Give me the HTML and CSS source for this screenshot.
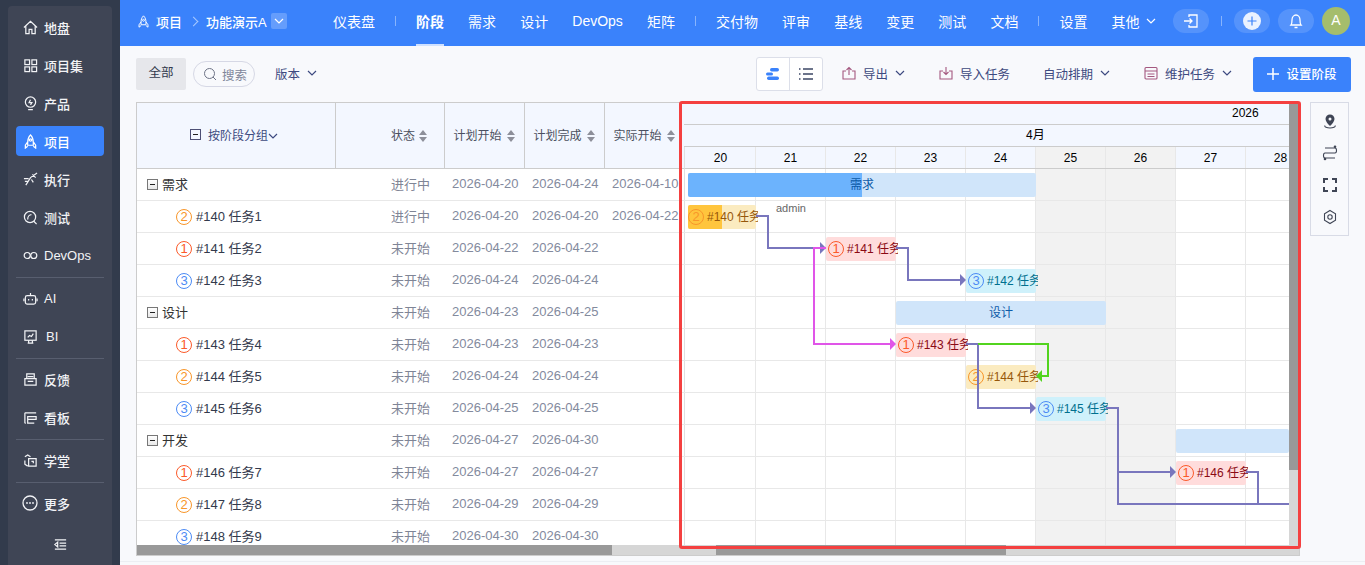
FILE: index.html

```html
<!DOCTYPE html>
<html lang="zh-CN">
<head>
  <meta charset="UTF-8">
  <meta name="viewport" content="width=device-width, initial-scale=1.0">
  <title>阶段 - 功能演示A</title>
  <link rel="stylesheet" href="styles.css">
</head>
<body>

<svg class="sprites" width="0" height="0">
  <symbol id="i-home" viewBox="0 0 16 16"><path d="M1 8 8 1.500 15 8M3 6.500V14.500h3.500V10h3v4.500H13V6.500"/></symbol>
  <symbol id="i-grid" viewBox="0 0 16 16"><rect x="2" y="2" width="5" height="5"/><rect x="9.500" y="2" width="5" height="5"/><rect x="2" y="9.500" width="5" height="5"/><rect x="9.500" y="9.500" width="5" height="5"/></symbol>
  <symbol id="i-bulb" viewBox="0 0 16 16"><circle cx="8" cy="6.500" r="5.500"/><path d="M8 4 6.500 7H9.500L8 9.500M5.500 14.500h5"/></symbol>
  <symbol id="i-rocket" viewBox="0 0 16 16"><path d="M8 1c2.500 2.500 3 5 3 8v3H5V9c0-3 .5-5.500 3-8ZM5 8.500 2.500 12v3L5 13M11 8.500 13.500 12v3L11 13"/><circle cx="8" cy="6.500" r="1.200"/></symbol>
  <symbol id="i-run" viewBox="0 0 16 16"><path d="M15 1 8 6 3 14M10 2.500l3.500 3.500M9 8l2 3M1 7h5M2 10h3"/></symbol>
  <symbol id="i-test" viewBox="0 0 16 16"><circle cx="7.500" cy="7.500" r="6"/><path d="M11.500 12 14.500 15M5 10c0-3 2-5 4-5"/></symbol>
  <symbol id="i-loop" viewBox="0 0 16 16"><circle cx="4.500" cy="8" r="3.200"/><circle cx="11.500" cy="8" r="3.200"/></symbol>
  <symbol id="i-bot" viewBox="0 0 16 16"><rect x="2.500" y="5" width="11" height="9" rx="2"/><path d="M8 5V2M1 8v3M15 8v3M6 8.500v1.500M10 8.500v1.500"/></symbol>
  <symbol id="i-board" viewBox="0 0 16 16"><rect x="2" y="2" width="12" height="10"/><path d="M5 15h6M6 12v3M10 12v3M5 9l2-2 2 1 2-3"/></symbol>
  <symbol id="i-print" viewBox="0 0 16 16"><path d="M4 7V2h8v5M2 7h12v7H2ZM5 10h6M5 5h6"/></symbol>
  <symbol id="i-kanban" viewBox="0 0 16 16"><path d="M2 3h12M2 3v11M5 7h9v3H5ZM5 10v4h7M2 14h1"/></symbol>
  <symbol id="i-school" viewBox="0 0 16 16"><path d="M2 4 5 2l3 2M6 6h8v8H6ZM2 8v4l3 2M9 9h2v2"/></symbol>
  <symbol id="i-collapse" viewBox="0 0 16 16"><path d="M2 3h12M7 6.500h7M7 9.500h7M2 13h12M5 5.500 2 8l3 2.500Z"/></symbol>
  <symbol id="i-down" viewBox="0 0 10 10"><path d="M1 3 5 7l4-4"/></symbol>
  <symbol id="i-search" viewBox="0 0 14 14"><circle cx="6.500" cy="6.500" r="5"/><path d="m10 10 3 3"/></symbol>
  <symbol id="i-out" viewBox="0 0 14 14"><path d="M4 5H1v8h12V5H10M7 9V1.500M4.500 4 7 1.500 9.500 4"/></symbol>
  <symbol id="i-in" viewBox="0 0 14 14"><path d="M4 5H1v8h12V5H10M7 1v7.500M4.500 6 7 8.500 9.500 6"/></symbol>
  <symbol id="i-table" viewBox="0 0 14 14"><rect x="1" y="1.500" width="12" height="11.500" rx="1"/><path d="M1 5h12M3.500 8h7M3.500 10.500h7"/></symbol>
</svg>

<div class="app">
  <aside class="sidebar">
    <nav class="side-panel">
      <a class="side-item"><svg class="side-icon"><use href="#i-home"/></svg>地盘</a>
      <a class="side-item"><svg class="side-icon"><use href="#i-grid"/></svg>项目集</a>
      <a class="side-item"><svg class="side-icon"><use href="#i-bulb"/></svg>产品</a>
      <a class="side-item is-active"><svg class="side-icon"><use href="#i-rocket"/></svg>项目</a>
      <a class="side-item"><svg class="side-icon"><use href="#i-run"/></svg>执行</a>
      <a class="side-item"><svg class="side-icon"><use href="#i-test"/></svg>测试</a>
      <a class="side-item"><svg class="side-icon"><use href="#i-loop"/></svg>DevOps</a>
      <div class="side-divider"></div>
      <a class="side-item"><svg class="side-icon"><use href="#i-bot"/></svg>AI</a>
      <a class="side-item"><svg class="side-icon"><use href="#i-board"/></svg><span class="side-bi">BI</span></a>
      <div class="side-divider"></div>
      <a class="side-item"><svg class="side-icon"><use href="#i-print"/></svg>反馈</a>
      <a class="side-item"><svg class="side-icon"><use href="#i-kanban"/></svg>看板</a>
      <div class="side-divider"></div>
      <a class="side-item"><svg class="side-icon"><use href="#i-school"/></svg>学堂</a>
      <div class="side-divider"></div>
      <a class="side-item">
        <svg class="side-icon side-icon-more" viewBox="0 0 16 16"><circle cx="8" cy="8" r="7"/><circle class="dot" cx="5" cy="8" r=".9"/><circle class="dot" cx="8" cy="8" r=".9"/><circle class="dot" cx="11" cy="8" r=".9"/></svg>更多
      </a>
      <a class="side-collapse"><svg class="side-icon"><use href="#i-collapse"/></svg></a>
    </nav>
  </aside>

  <div class="main">
    <header class="topbar">
      <div class="crumbs">
        <svg class="crumb-icon"><use href="#i-rocket"/></svg>
        <span>项目</span>
        <span class="crumb-sep"></span>
        <span>功能演示A</span>
        <span class="crumb-drop"><svg class="chev"><use href="#i-down"/></svg></span>
      </div>
      <nav class="topnav">
        <a>仪表盘</a>
        <i class="top-divider"></i>
        <a class="is-current">阶段</a>
        <a>需求</a>
        <a>设计</a>
        <a>DevOps</a>
        <a>矩阵</a>
        <i class="top-divider"></i>
        <a>交付物</a>
        <a>评审</a>
        <a>基线</a>
        <a>变更</a>
        <a>测试</a>
        <a>文档</a>
        <i class="top-divider"></i>
        <a>设置</a>
        <a class="top-more">其他<svg class="chev"><use href="#i-down"/></svg></a>
      </nav>
      <div class="top-actions">
        <span class="pill">
          <svg class="pill-icon" viewBox="0 0 16 16"><path d="M6 4V2h8v12H6v-2M1 8h8M6.500 5.500 9 8l-2.500 2.500"/></svg>
        </span>
        <i class="top-divider"></i>
        <span class="pill">
          <svg class="plus-icon" viewBox="0 0 18 18"><circle cx="9" cy="9" r="9"/><path d="M9 4.500v9M4.500 9h9"/></svg>
        </span>
        <span class="pill">
          <svg class="pill-icon" viewBox="0 0 16 16"><path d="M3 12c1-1 1-2 1-5 0-3 2-5 4-5s4 2 4 5c0 3 0 4 1 5ZM6.500 14.500h3"/></svg>
        </span>
        <span class="avatar">A</span>
      </div>
    </header>

    <div class="toolbar">
      <span class="tab-all">全部</span>
      <span class="search"><svg class="search-icon"><use href="#i-search"/></svg>搜索</span>
      <span class="tool version">版本<svg class="chev"><use href="#i-down"/></svg></span>
      <div class="tool-right">
        <div class="seg">
          <span class="seg-btn">
            <svg width="16" height="14" viewBox="0 0 16 14"><rect class="seg-blue" x="5" y="1" width="9" height="3.500" rx="1.700"/><rect class="seg-blue" x="1" y="5.500" width="7" height="3" rx="1.500"/><rect class="seg-blue" x="2" y="9.500" width="12" height="3.500" rx="1.700"/></svg>
          </span>
          <span class="seg-btn">
            <svg width="16" height="14" viewBox="0 0 16 14"><path class="seg-list" d="M5 2h10M5 7h10M5 12h10M1 2h1.500M1 7h1.500M1 12h1.500"/></svg>
          </span>
        </div>
        <span class="tool tool-export"><svg class="tool-icon"><use href="#i-out"/></svg>导出<svg class="chev"><use href="#i-down"/></svg></span>
        <span class="tool tool-import"><svg class="tool-icon"><use href="#i-in"/></svg>导入任务</span>
        <span class="tool tool-auto">自动排期<svg class="chev"><use href="#i-down"/></svg></span>
        <span class="tool tool-keep"><svg class="tool-icon"><use href="#i-table"/></svg>维护任务<svg class="chev"><use href="#i-down"/></svg></span>
        <span class="btn-primary">
          <svg width="12" height="12" viewBox="0 0 12 12"><path d="M6 0v12M0 6h12"/></svg>设置阶段
        </span>
      </div>
    </div>

    <div class="content">
      <div class="gantt">
        <div class="grid-pane">
          <div class="grid-head">
            <div class="th th-tree"><span class="box box-head"></span>按阶段分组<svg class="chev"><use href="#i-down"/></svg></div>
            <div class="th th-status">状态<span class="sort"></span></div>
            <div class="th th-date">计划开始<span class="sort"></span></div>
            <div class="th th-date">计划完成<span class="sort"></span></div>
            <div class="th th-date">实际开始<span class="sort"></span></div>
          </div>
          <div class="grid-body">
            <div class="row"><div class="cell-name group"><span class="box"></span>需求</div><div class="cell-status">进行中</div><div class="cell-date">2026-04-20</div><div class="cell-date">2026-04-24</div><div class="cell-date">2026-04-10</div></div>
            <div class="row"><div class="cell-name task"><span class="pri pri-2">2</span>#140 任务1</div><div class="cell-status">进行中</div><div class="cell-date">2026-04-20</div><div class="cell-date">2026-04-20</div><div class="cell-date">2026-04-22</div></div>
            <div class="row"><div class="cell-name task"><span class="pri pri-1">1</span>#141 任务2</div><div class="cell-status">未开始</div><div class="cell-date">2026-04-22</div><div class="cell-date">2026-04-22</div><div class="cell-date"></div></div>
            <div class="row"><div class="cell-name task"><span class="pri pri-3">3</span>#142 任务3</div><div class="cell-status">未开始</div><div class="cell-date">2026-04-24</div><div class="cell-date">2026-04-24</div><div class="cell-date"></div></div>
            <div class="row"><div class="cell-name group"><span class="box"></span>设计</div><div class="cell-status">未开始</div><div class="cell-date">2026-04-23</div><div class="cell-date">2026-04-25</div><div class="cell-date"></div></div>
            <div class="row"><div class="cell-name task"><span class="pri pri-1">1</span>#143 任务4</div><div class="cell-status">未开始</div><div class="cell-date">2026-04-23</div><div class="cell-date">2026-04-23</div><div class="cell-date"></div></div>
            <div class="row"><div class="cell-name task"><span class="pri pri-2">2</span>#144 任务5</div><div class="cell-status">未开始</div><div class="cell-date">2026-04-24</div><div class="cell-date">2026-04-24</div><div class="cell-date"></div></div>
            <div class="row"><div class="cell-name task"><span class="pri pri-3">3</span>#145 任务6</div><div class="cell-status">未开始</div><div class="cell-date">2026-04-25</div><div class="cell-date">2026-04-25</div><div class="cell-date"></div></div>
            <div class="row"><div class="cell-name group"><span class="box"></span>开发</div><div class="cell-status">未开始</div><div class="cell-date">2026-04-27</div><div class="cell-date">2026-04-30</div><div class="cell-date"></div></div>
            <div class="row"><div class="cell-name task"><span class="pri pri-1">1</span>#146 任务7</div><div class="cell-status">未开始</div><div class="cell-date">2026-04-27</div><div class="cell-date">2026-04-27</div><div class="cell-date"></div></div>
            <div class="row"><div class="cell-name task"><span class="pri pri-2">2</span>#147 任务8</div><div class="cell-status">未开始</div><div class="cell-date">2026-04-29</div><div class="cell-date">2026-04-29</div><div class="cell-date"></div></div>
            <div class="row"><div class="cell-name task"><span class="pri pri-3">3</span>#148 任务9</div><div class="cell-status">未开始</div><div class="cell-date">2026-04-30</div><div class="cell-date">2026-04-30</div><div class="cell-date"></div></div>
          </div>
          <div class="hscroll"><div class="thumb thumb-grid"></div></div>
        </div>

        <div class="chart-pane">
          <div class="chart-main">
            <div class="chart-view">
              <div class="scale">
                <div class="scale-year">2026</div>
                <div class="scale-month">4月</div>
                <div class="scale-days">
                  <span class="day">20</span>
                  <span class="day">21</span>
                  <span class="day">22</span>
                  <span class="day">23</span>
                  <span class="day">24</span>
                  <span class="day is-off">25</span>
                  <span class="day is-off">26</span>
                  <span class="day">27</span>
                  <span class="day">28</span>
                </div>
              </div>
              <div class="canvas">
                <div class="cols">
                  <span class="col"></span>
                  <span class="col"></span>
                  <span class="col"></span>
                  <span class="col"></span>
                  <span class="col"></span>
                  <span class="col is-off"></span>
                  <span class="col is-off"></span>
                  <span class="col"></span>
                  <span class="col"></span>
                </div>
                <div class="row-lines"></div>

                <div class="bar bar-phase" style="left:4px;top:4px;width:348px"><div class="bar-fill fill-phase" style="width:174px"></div><span class="bar-title">需求</span></div>
                <div class="bar bar-amber" style="left:4px;top:36px;width:68px"><div class="bar-fill fill-amber" style="width:34px"></div><div class="bar-text bar-text-flush"><span class="pri pri-2">2</span>#140 任务1</div></div>
                <span class="assignee" style="left:92px;top:33px">admin</span>
                <div class="bar bar-red" style="left:142px;top:68px;width:70px"><div class="bar-text"><span class="pri pri-1">1</span>#141 任务2</div></div>
                <div class="bar bar-cyan" style="left:282px;top:100px;width:70px"><div class="bar-text"><span class="pri pri-3">3</span>#142 任务3</div></div>
                <div class="bar bar-phase" style="left:212px;top:132px;width:210px"><span class="bar-title">设计</span></div>
                <div class="bar bar-red" style="left:212px;top:164px;width:70px"><div class="bar-text"><span class="pri pri-1">1</span>#143 任务4</div></div>
                <div class="bar bar-amber" style="left:282px;top:196px;width:70px"><div class="bar-text"><span class="pri pri-2">2</span>#144 任务5</div></div>
                <div class="bar bar-cyan" style="left:352px;top:228px;width:70px"><div class="bar-text"><span class="pri pri-3">3</span>#145 任务6</div></div>
                <div class="bar bar-phase" style="left:492px;top:260px;width:113px"></div>
                <div class="bar bar-red" style="left:492px;top:292px;width:70px"><div class="bar-text"><span class="pri pri-1">1</span>#146 任务7</div></div>

                <svg class="links" width="605" height="376" viewBox="684 169 605 376">
                  <path class="link" d="M756 216H768V248H821"/>
                  <path class="head" d="M820 242 826 248 820 254Z"/>
                  <path class="link" d="M896 248H908V280H961"/>
                  <path class="head" d="M960 274 966 280 960 286Z"/>
                  <path class="link-pink" d="M826 248H814V344H891"/>
                  <path class="head-pink" d="M890 338 896 344 890 350Z"/>
                  <path class="link" d="M966 344H978V408H1031"/>
                  <path class="head" d="M1030 402 1036 408 1030 414Z"/>
                  <path class="link-green" d="M978 344H1048V376H1041"/>
                  <path class="head-green" d="M1042 370 1036 376 1042 382Z"/>
                  <path class="link" d="M1106 408H1118V504H1289M1118 472H1171"/>
                  <path class="head" d="M1170 466 1176 472 1170 478Z"/>
                  <path class="link" d="M1246 472H1258V504"/>
                </svg>
              </div>
            </div>
            <div class="vscroll"><div class="thumb thumb-v"></div></div>
          </div>
          <div class="hscroll"><div class="thumb thumb-chart"></div></div>
        </div>

        <div class="highlight"></div>
      </div>

      <div class="side-tools">
        <svg class="st-icon" viewBox="0 0 16 16"><path class="st-solid" d="M8 1.500c-2.500 0-4.500 2-4.500 4.500 0 2.500 2.500 5 4.500 7 2-2 4.500-4.500 4.500-7 0-2.500-2-4.500-4.500-4.500Z"/><circle class="st-hole" cx="8" cy="6" r="1.500"/><path d="M3 12.500c-1 1.500 2 2.500 5 2.500s6-1 5-2.500"/></svg>
        <svg class="st-icon" viewBox="0 0 16 16"><path d="M3 3h10c2 0 2 5 0 5H3c-2 0-2 5 0 5h10"/><circle class="st-solid" cx="13" cy="1.800" r="1.300"/><circle class="st-solid" cx="3" cy="14" r="1.300"/></svg>
        <svg class="st-icon" viewBox="0 0 16 16"><path class="st-bold" d="M2 6V2h4M10 2h4v4M14 10v4h-4M6 14H2v-4"/></svg>
        <svg class="st-icon" viewBox="0 0 16 16"><path d="M8 1.500 13.500 4.700v6.600L8 14.500 2.500 11.300V4.700Z"/><circle cx="8" cy="8" r="2.200"/></svg>
      </div>
    </div>

    <div class="footer"></div>
  </div>
</div>

</body>
</html>
```

FILE: styles.css

```css
html, body {
  margin: 0;
  height: 100%;
  overflow: hidden;
}
body {
  background: #f8f9fc;
  color: #333a4d;
  font-family: "Liberation Sans", "Noto Sans CJK SC", sans-serif;
  font-size: 13px;
}
.sprites {
  position: absolute;
}
svg {
  fill: none;
  stroke: currentColor;
}
.app {
  display: flex;
  height: 565px;
}

/* left menu */
.sidebar {
  flex: none;
  width: 120px;
  padding: 6px 8px 0;
  box-sizing: border-box;
  background: #323b4c;
}
.side-panel {
  height: 100%;
  padding: 6px 8px 0;
  box-sizing: border-box;
  border-radius: 4px 4px 0 0;
  background: #3f4555;
}
.side-item {
  display: flex;
  align-items: center;
  gap: 6px;
  height: 30px;
  margin-bottom: 8px;
  padding-left: 7px;
  border-radius: 4px;
  color: #f2f3f6;
  font-weight: 500;
}
.side-item.is-active {
  background: #3a82fb;
  color: #fff;
}
.side-icon {
  flex: none;
  width: 15px;
  height: 15px;
  stroke-width: 1.300;
}
.side-icon .dot {
  fill: currentColor;
  stroke: none;
}
.side-icon-more {
  width: 16px;
  height: 16px;
  margin-left: -1px;
}
.side-bi {
  margin-left: 2px;
}
.side-divider {
  height: 1px;
  margin: -1px 0 5px;
  background: #585e6f;
}
.side-collapse {
  display: flex;
  justify-content: center;
  padding-top: 11px;
  color: #f2f3f6;
}

/* top bar */
.main {
  flex: 1;
  min-width: 0;
  display: flex;
  flex-direction: column;
}
.topbar {
  flex: none;
  display: flex;
  align-items: center;
  height: 46px;
  padding: 0 15px 0 17px;
  box-sizing: border-box;
  background: #3a82fb;
  color: #fff;
  font-size: 14px;
}
.chev {
  flex: none;
  width: 10px;
  height: 10px;
  stroke-width: 1.200;
}
.crumbs {
  flex: none;
  display: flex;
  align-items: center;
  width: 196px;
  margin-bottom: 4px;
  font-size: 13px;
  font-weight: 500;
}
.crumb-icon {
  width: 13px;
  height: 13px;
  margin-right: 6px;
  stroke-width: 1.200;
}
.crumb-sep {
  width: 6px;
  height: 6px;
  margin: 0 9px 0 8px;
  border-top: 1px solid #a9caff;
  border-right: 1px solid #a9caff;
  transform: rotate(45deg);
}
.crumb-drop {
  display: flex;
  align-items: center;
  justify-content: center;
  width: 16px;
  height: 16px;
  margin-left: 4px;
  border-radius: 2px;
  background: rgba(255, 255, 255, .22);
}
.topnav {
  display: flex;
  align-items: center;
  gap: 24.100px;
  height: 100%;
}
.topnav a {
  display: flex;
  align-items: center;
  gap: 6px;
  height: 100%;
  padding-bottom: 5px;
  box-sizing: border-box;
}
.topnav a.is-current {
  box-shadow: inset 0 -2px 0 #cfe1ff;
  font-weight: 700;
}
.topnav .top-divider {
  margin-bottom: 4px;
}
.top-divider {
  width: 1px;
  height: 10px;
  margin: 0 -4.100px;
  background: rgba(255, 255, 255, .4);
}
.top-actions {
  margin-left: auto;
  margin-bottom: 4px;
  display: flex;
  align-items: center;
  gap: 8px;
}
.top-actions .top-divider {
  margin: 0 4px;
}
.pill {
  display: flex;
  align-items: center;
  justify-content: center;
  width: 36px;
  height: 24px;
  border-radius: 12px;
  background: rgba(255, 255, 255, .14);
}
.pill-icon {
  width: 16px;
  height: 16px;
  stroke-width: 1.300;
}
.plus-icon {
  width: 18px;
  height: 18px;
}
.plus-icon circle {
  fill: #eaf2ff;
  stroke: none;
}
.plus-icon path {
  stroke: #3a82fb;
  stroke-width: 1.200;
}
.avatar {
  width: 28px;
  height: 28px;
  border-radius: 50%;
  background: #a5bd6c;
  line-height: 27px;
  text-align: center;
}

/* tool row */
.toolbar {
  flex: none;
  display: flex;
  align-items: center;
  height: 56px;
  padding: 0 14px 0 16px;
  box-sizing: border-box;
  color: #3d4a80;
  font-size: 12.500px;
}
.tab-all {
  width: 50px;
  height: 32px;
  border-radius: 2px;
  background: #e6e7eb;
  color: #333a4d;
  line-height: 30px;
  text-align: center;
}
.search {
  display: flex;
  align-items: center;
  gap: 5px;
  width: 62px;
  height: 26px;
  margin-left: 7px;
  padding-left: 9px;
  box-sizing: border-box;
  border: 1px solid #d6d8e5;
  border-radius: 13px;
  color: #80869a;
}
.search-icon {
  width: 14px;
  height: 14px;
  color: #6d7386;
}
.tool {
  display: flex;
  align-items: center;
  padding-bottom: 2px;
  white-space: nowrap;
}
.tool .chev {
  margin-left: 7px;
}
.tool-icon {
  width: 14px;
  height: 14px;
  margin-right: 7px;
  color: #a4587f;
  stroke-width: 1.100;
}
.version {
  margin-left: 20px;
}
.tool-right {
  margin-left: auto;
  display: flex;
  align-items: center;
}
.seg {
  display: flex;
  width: 67px;
  height: 34px;
  box-sizing: border-box;
  border: 1px solid #dcdfe9;
  border-radius: 3px;
  background: #fff;
}
.seg-btn {
  flex: 1;
  display: flex;
  align-items: center;
  justify-content: center;
}
.seg-btn + .seg-btn {
  border-left: 1px solid #dcdfe9;
}
.seg-blue {
  fill: #3a82fb;
  stroke: none;
}
.seg-list {
  stroke: #3d4766;
  stroke-width: 1.500;
}
.tool-export {
  margin-left: 19px;
}
.tool-import {
  margin-left: 34px;
}
.tool-auto {
  margin-left: 33px;
}
.tool-keep {
  margin-left: 34px;
}
.btn-primary {
  display: flex;
  align-items: center;
  justify-content: center;
  gap: 7px;
  width: 98px;
  height: 35px;
  margin-left: 21px;
  padding-bottom: 1px;
  box-sizing: border-box;
  border-radius: 3px;
  background: #3a82fb;
  color: #fff;
  font-weight: 500;
}
.btn-primary svg {
  stroke-width: 1.500;
}

/* gantt */
.content {
  flex: 1;
  min-height: 0;
  display: flex;
  align-items: flex-start;
  gap: 10px;
  padding-left: 16px;
}
.gantt {
  position: relative;
  display: flex;
  width: 1164px;
  height: 454px;
  box-sizing: border-box;
  border: 1px solid #ccc;
  background: #fff;
}
.grid-pane {
  flex: none;
  display: flex;
  flex-direction: column;
  width: 547px;
}
.grid-head {
  flex: none;
  display: grid;
  grid-template-columns: 199px 109px 80px 80px 79px;
  height: 66px;
  box-sizing: border-box;
  border-bottom: 1px solid #ccc;
  background: #f3f7ff;
  color: #4b5060;
  font-size: 12px;
}
.th {
  display: flex;
  align-items: center;
  padding-bottom: 2px;
  box-sizing: border-box;
  border-right: 1px solid #ccc;
}
.th:last-child {
  border-right: 0;
}
.th-tree {
  justify-content: center;
  color: #3d4a80;
  padding-right: 4px;
}
.th-status {
  padding-left: 55px;
}
.th-status .sort {
  margin-left: 4px;
}
.th-date {
  padding-left: 8.500px;
}
.th-tree .chev {
  margin-top: 2px;
}
.sort {
  position: relative;
  flex: none;
  width: 9px;
  height: 12px;
  margin-left: 5px;
  margin-top: 2px;
}
.sort::before, .sort::after {
  content: "";
  position: absolute;
  left: 0;
  border-left: 4.500px solid transparent;
  border-right: 4.500px solid transparent;
}
.sort::before {
  top: 0;
  border-bottom: 5px solid #8d8f9a;
}
.sort::after {
  bottom: 0;
  border-top: 5px solid #8d8f9a;
}
.grid-body {
  flex: 1;
  min-height: 0;
  overflow: hidden;
}
.row {
  display: grid;
  grid-template-columns: 199px 109px 80px 80px 79px;
  align-items: center;
  height: 32px;
  padding-bottom: 2px;
  box-sizing: border-box;
  border-bottom: 1px solid #e8e8e8;
}
.cell-name {
  display: flex;
  align-items: center;
  white-space: nowrap;
}
.group {
  padding-left: 10px;
  gap: 4px;
  color: #333;
}
.group .box {
  margin-top: 1px;
}
.task {
  padding-left: 39px;
  gap: 4px;
}
.task .pri {
  margin-top: 2px;
}
.cell-status {
  padding-left: 55px;
  color: #7f8596;
}
.cell-date {
  padding-left: 7px;
  overflow: hidden;
  color: #838a9d;
  white-space: nowrap;
}
.box {
  position: relative;
  flex: none;
  width: 11px;
  height: 11px;
  box-sizing: border-box;
  border: 1px solid #777;
  background: linear-gradient(#fff, #e8e8e8);
}
.box::after {
  content: "";
  position: absolute;
  left: 2px;
  top: 4px;
  width: 5px;
  height: 1px;
  background: #222;
}
.box-head {
  margin-right: 7px;
  border-color: #4d4f75;
  background: none;
}
.pri {
  flex: none;
  display: inline-block;
  width: 16px;
  height: 16px;
  box-sizing: border-box;
  border: 1px solid;
  border-radius: 50%;
  font-size: 13px;
  line-height: 14px;
  text-align: center;
}
.pri-1 {
  color: #fb5a2a;
}
.pri-2 {
  color: #f8962a;
}
.pri-3 {
  color: #4c8bf5;
}
.hscroll {
  flex: none;
  height: 10px;
  background: #d6d6d6;
}
.thumb {
  background: #999;
}
.hscroll .thumb {
  height: 100%;
}
.thumb-grid {
  width: 475px;
}
.thumb-chart {
  width: 290px;
  margin-left: 32px;
}
.chart-pane {
  flex: 1;
  min-width: 0;
  display: flex;
  flex-direction: column;
}
.chart-main {
  flex: 1;
  min-height: 0;
  display: flex;
}
.chart-view {
  flex: 1;
  min-width: 0;
  overflow: hidden;
}
.vscroll {
  flex: none;
  width: 10px;
  background: #d6d6d6;
}
.thumb-v {
  height: 367px;
}
.scale {
  background: #f3f7ff;
  color: #000;
  font-size: 12px;
}
.scale-year, .scale-month {
  height: 22px;
  box-sizing: border-box;
  border-bottom: 1px solid #ccc;
  line-height: 21px;
}
.scale-year {
  padding-left: 548px;
}
.scale-month {
  padding-left: 342px;
}
.scale-days {
  display: flex;
  height: 22px;
  padding-left: 1px;
  box-sizing: border-box;
  border-left: 1px solid #e0e0e0;
  border-bottom: 1px solid #ccc;
}
.day, .col {
  flex: none;
  width: 70px;
  box-sizing: border-box;
  border-right: 1px solid #e8e8e8;
}
.day {
  line-height: 22px;
  text-align: center;
}
.is-off {
  background: #f2f2f2;
}
.canvas {
  position: relative;
  height: 376px;
}
.cols {
  display: flex;
  height: 100%;
  padding-left: 1px;
  box-sizing: border-box;
  border-left: 1px solid #e0e0e0;
}
.row-lines {
  position: absolute;
  inset: 0;
  background: repeating-linear-gradient(to bottom, transparent 0 31px, #e8e8e8 31px 32px);
}
.bar {
  position: absolute;
  height: 24px;
  border-radius: 2px;
  font-size: 12px;
  line-height: 24px;
}
.bar-fill {
  position: absolute;
  left: 0;
  top: 0;
  bottom: 0;
  border-radius: 2px 0 0 2px;
}
.bar-phase {
  background: #d0e5fa;
}
.fill-phase {
  background: #6cb3fd;
}
.bar-title {
  position: absolute;
  inset: 0;
  color: #0d5ba8;
  text-align: center;
}
.bar-amber {
  background: #fbebc0;
  color: #97580a;
}
.fill-amber {
  background: #ffc53d;
}
.bar-red {
  background: #ffdcdc;
  color: #8b0a14;
}
.bar-cyan {
  background: #cff1fb;
  color: #00708f;
}
.bar-text {
  position: absolute;
  left: 0;
  top: 0;
  right: -2px;
  bottom: 0;
  display: flex;
  align-items: center;
  gap: 3px;
  padding-left: 2px;
  overflow: hidden;
  white-space: nowrap;
}
.bar-text-flush {
  padding-left: 0;
}
.assignee {
  position: absolute;
  color: #666;
  font-size: 11px;
  line-height: 12px;
}
.links {
  position: absolute;
  left: 0;
  top: 0;
  stroke-width: 2;
}
.link {
  stroke: #7976bd;
}
.link-pink {
  stroke: #e055e8;
}
.link-green {
  stroke: #52d41e;
}
.head {
  fill: #7976bd;
  stroke: none;
}
.head-pink {
  fill: #e055e8;
  stroke: none;
}
.head-green {
  fill: #52d41e;
  stroke: none;
}
.highlight {
  position: absolute;
  left: 542px;
  top: -2px;
  width: 622px;
  height: 448px;
  box-sizing: border-box;
  border: 3px solid #f44040;
  border-radius: 3px;
  pointer-events: none;
}
.side-tools {
  flex: none;
  display: flex;
  flex-direction: column;
  align-items: center;
  gap: 16px;
  width: 39px;
  height: 134px;
  padding-top: 10px;
  box-sizing: border-box;
  border: 1px solid #d8dbe6;
  color: #3f4555;
}
.st-icon {
  width: 16px;
  height: 16px;
  stroke-width: 1.100;
}
.st-solid {
  fill: currentColor;
  stroke: none;
}
.st-hole {
  fill: #f8f9fc;
  stroke: none;
}
.st-bold {
  stroke-width: 2;
}
.footer {
  flex: none;
  height: 3px;
  border-top: 1px solid #eceef3;
}
```
